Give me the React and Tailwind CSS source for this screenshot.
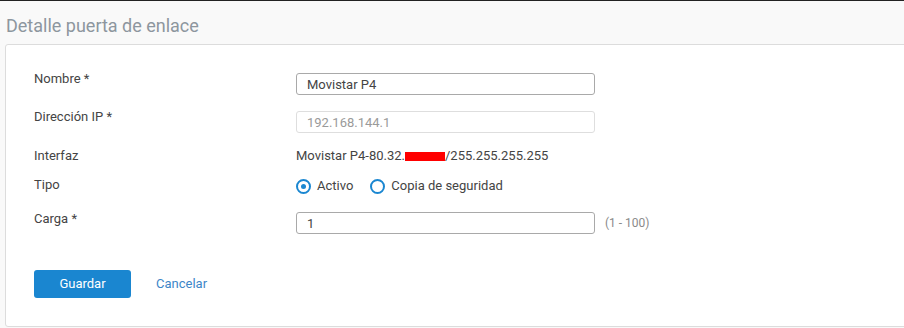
import React, { useState } from 'react';

function Field({ label, children, labelClass = '' }) {
  return (
    <div className="flex items-start">
      <div className={'w-[262px] shrink-0 leading-4 text-[#444] ' + labelClass}>{label}</div>
      <div className="flex items-center">{children}</div>
    </div>
  );
}

function Radio({ checked, label, onClick }) {
  return (
    <button type="button" onClick={onClick} className="flex items-center gap-[6px] text-[#444]">
      <span className="flex h-[15px] w-[15px] items-center justify-center rounded-full border-2 border-[#1b87d1]">
        {checked && <span className="h-[5px] w-[5px] rounded-full bg-[#1b87d1]" />}
      </span>
      <span className="leading-4">{label}</span>
    </button>
  );
}

export default function App() {
  const [tipo, setTipo] = useState('activo');
  const [nombre, setNombre] = useState('Movistar P4');
  const [carga, setCarga] = useState('1');

  return (
    <div
      className="min-h-[328px] w-[904px] overflow-hidden border-t border-[#222] bg-[#f9f9f9] text-[13px]"
      style={{ fontFamily: 'Roboto, "Liberation Sans", sans-serif' }}
    >
      <h1 className="pl-[6px] pt-[13px] text-[18px] leading-[24px] text-[#8d969e]">Detalle puerta de enlace</h1>

      <div className="ml-[5px] mt-[6px] -mr-[10px] rounded-[3px] border border-[#dcdcdc] bg-white pb-[28px] pl-[28px] pt-[28px]">
        {/* Nombre */}
        <Field label="Nombre *" labelClass="-mt-[2px]">
          <input
            value={nombre}
            onChange={(e) => setNombre(e.target.value)}
            className="h-[22px] w-[299px] rounded-[3px] border border-[#a9a9a9] px-[10px] text-[13px] text-[#444] outline-none"
          />
        </Field>

        {/* Dirección IP */}
        <div className="mt-[16px]">
          <Field label="Dirección IP *" labelClass="-mt-[2px]">
            <input
              disabled
              value="192.168.144.1"
              readOnly
              className="h-[22px] w-[299px] rounded-[3px] border border-[#dedede] bg-white px-[10px] text-[13px] text-[#9a9a9a]"
            />
          </Field>
        </div>

        {/* Interfaz */}
        <div className="mt-[15px]">
          <Field label="Interfaz">
            <span className="leading-4 text-[#444]">
              Movistar P4-80.32.
              <span className="inline-block h-[9px] w-[40px] bg-[#ff0000] align-middle" />
              /255.255.255.255
            </span>
          </Field>
        </div>

        {/* Tipo */}
        <div className="mt-[13px]">
          <Field label="Tipo">
            <div className="mt-[1px] flex items-center gap-[17px]">
              <Radio checked={tipo === 'activo'} label="Activo" onClick={() => setTipo('activo')} />
              <Radio checked={tipo === 'copia'} label="Copia de seguridad" onClick={() => setTipo('copia')} />
            </div>
          </Field>
        </div>

        {/* Carga */}
        <div className="mt-[18px]">
          <Field label="Carga *" labelClass="-mt-[1px]">
            <input
              value={carga}
              onChange={(e) => setCarga(e.target.value)}
              className="h-[22px] w-[299px] rounded-[3px] border border-[#a9a9a9] px-[10px] text-[13px] text-[#444] outline-none"
            />
            <span className="ml-[10px] text-[12px] text-[#8a8a8a]">(1 - 100)</span>
          </Field>
        </div>

        {/* Acciones */}
        <div className="mt-[36px] flex items-center gap-[25px]">
          <button type="button" className="h-[28px] w-[97px] rounded-[3px] bg-[#1a86d0] text-[13px] text-white">
            Guardar
          </button>
          <button type="button" className="text-[13px] text-[#3d86c8]">
            Cancelar
          </button>
        </div>
      </div>
    </div>
  );
}
